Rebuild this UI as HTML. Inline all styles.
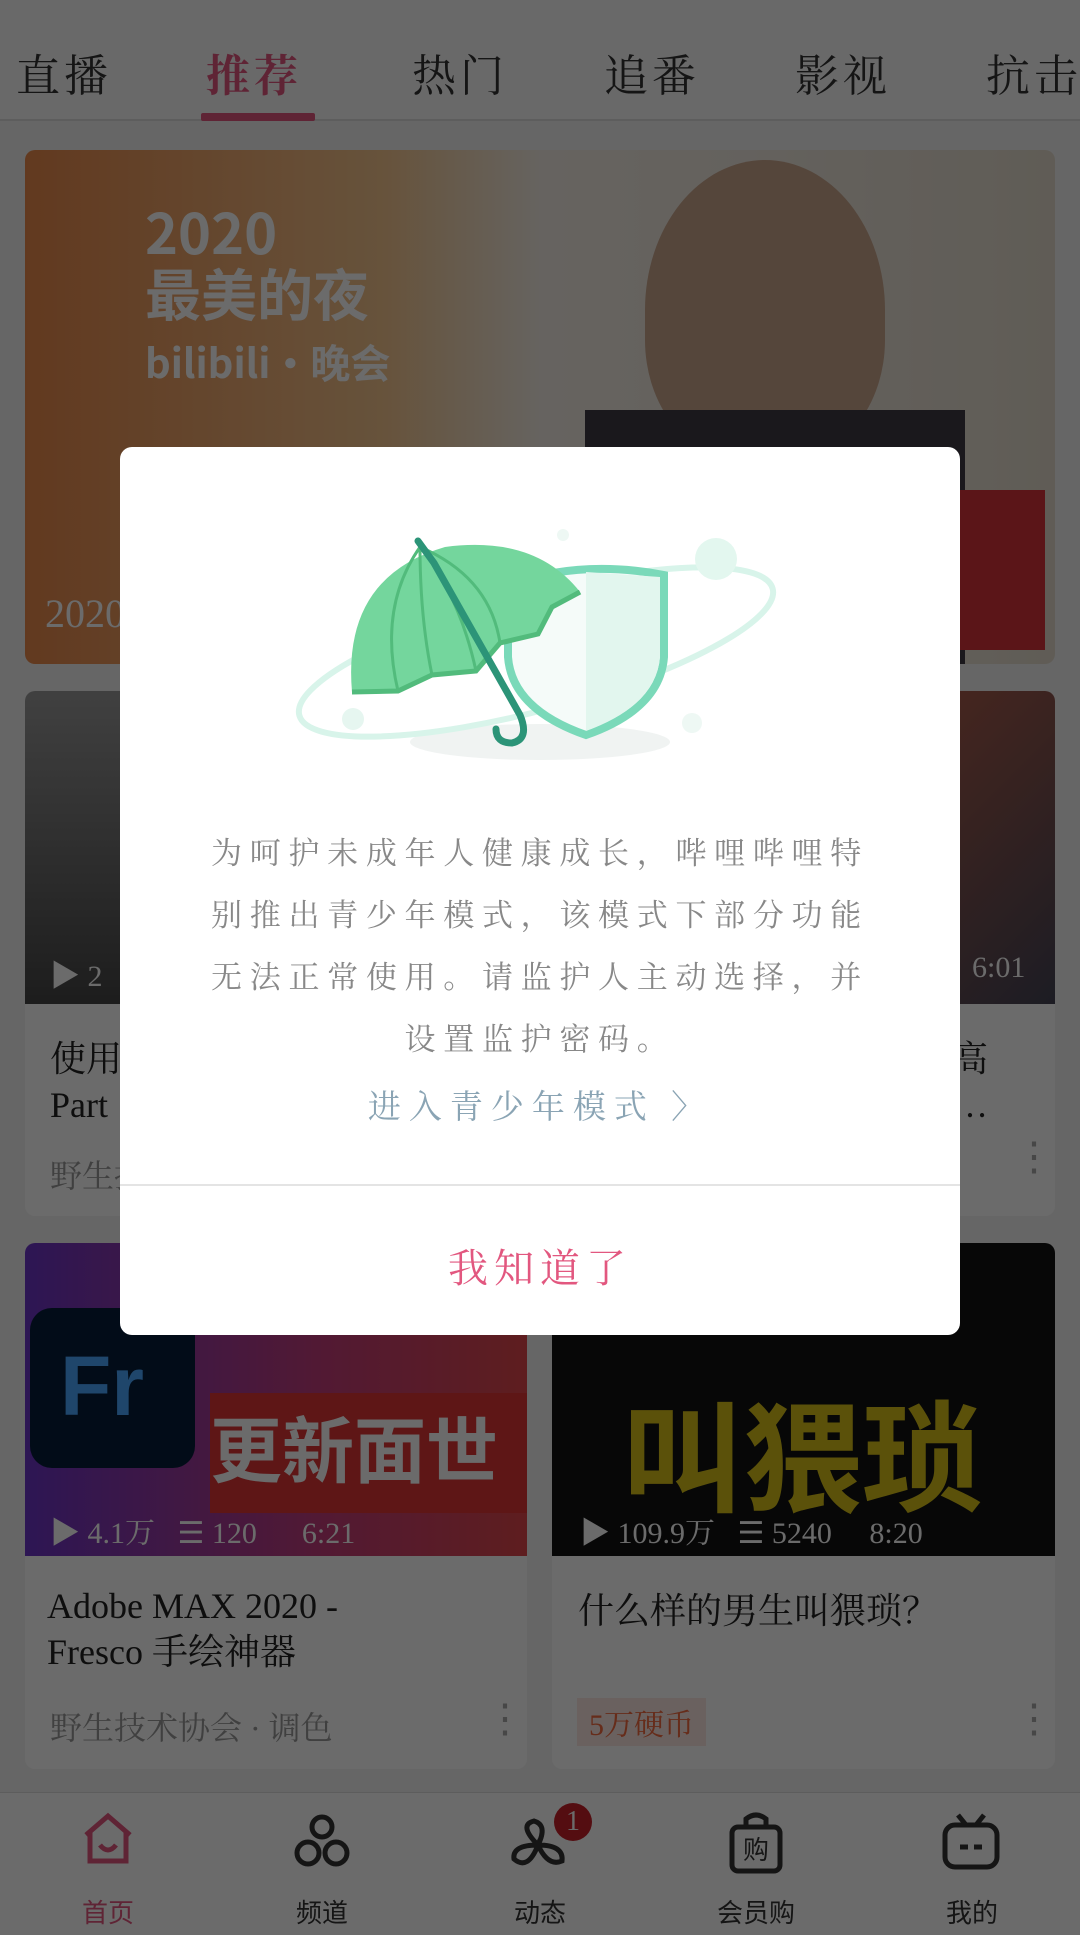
<!DOCTYPE html>
<html><head><meta charset="utf-8"><style>
*{margin:0;padding:0;box-sizing:border-box}
body{width:1080px;height:1935px;position:relative;overflow:hidden;background:#f4f4f4;font-family:"Liberation Serif","Noto Serif CJK SC","Noto Sans CJK SC",serif}
.abs{position:absolute}
.tabs{left:0;top:0;width:1080px;height:121px;background:#fafafa;border-bottom:2px solid #ddd}
.tab{position:absolute;top:40px;font-size:44px;color:#333;letter-spacing:4px;white-space:nowrap}
.card{background:#fff;border-radius:10px;overflow:hidden}
.t{font-size:36px;color:#222;line-height:46px}
.s{font-size:32px;color:#999}
.meta{font-size:30px;color:#fff}
.dots{font-size:40px;color:#aaa;line-height:12px}
.nav{left:0;top:1792px;width:1080px;height:143px;background:#fff;border-top:1px solid #ddd}
.ni{position:absolute;top:100px;font-size:26px;color:#333;width:120px;text-align:center;font-family:"Noto Sans CJK SC",sans-serif}
.ov{left:0;top:0;width:1080px;height:1935px;background:rgba(0,0,0,0.58)}
.dlg{left:120px;top:447px;width:840px;height:888px;background:#fff;border-radius:12px}
.txt{position:absolute;left:0;width:840px;top:376px;text-align:center;font-size:31px;line-height:62px;color:#888;letter-spacing:7.7px;white-space:nowrap}
</style></head><body>
<div class="abs tabs">
<div class="tab" style="left:16px">直播</div>
<div class="tab" style="left:206px;color:#e2577f;font-weight:bold">推荐</div>
<div class="abs" style="left:201px;top:113px;width:114px;height:8px;background:#e2577f;border-radius:2px"></div>
<div class="tab" style="left:412px">热门</div>
<div class="tab" style="left:604px">追番</div>
<div class="tab" style="left:795px">影视</div>
<div class="tab" style="left:986px">抗击</div>
</div>
<div class="abs card" style="left:25px;top:150px;width:1030px;height:514px;background:linear-gradient(90deg,#e9894b 0%,#f5c68f 35%,#f3ede4 50%,#efe8df 70%,#e4dccd 100%)">
<div class="abs" style="left:120px;top:50px;font-size:56px;color:#fff;font-weight:bold;font-family:'Noto Sans CJK SC',sans-serif;line-height:62px">2020<br>最美的夜<br><span style="font-size:40px">bilibili·晚会</span></div>
<div class="abs" style="left:620px;top:10px;width:240px;height:300px;border-radius:50% 50% 40% 40%;background:#caa68d"></div>
<div class="abs" style="left:560px;top:260px;width:380px;height:260px;background:#3e3a44"></div>
<div class="abs" style="left:880px;top:340px;width:140px;height:160px;background:#d9343a"></div>
<div class="abs" style="left:20px;top:440px;font-size:40px;color:#fff">2020</div>
</div>
<div class="abs card" style="left:25px;top:691px;width:502px;height:525px">
<div style="height:313px;background:linear-gradient(#9a9a9a,#454545)"></div>
<div class="abs t" style="left:25px;top:345px">使用 PS...<br>Part</div>
<div class="abs s" style="left:25px;top:460px">野生技术协会</div>
<div class="abs meta" style="left:25px;top:260px">▶ 2</div></div>
<div class="abs card" style="left:552px;top:691px;width:503px;height:525px">
<div style="height:313px;background:linear-gradient(135deg,#2a3a6a,#a45a4a,#445)"></div>
<div class="abs t" style="left:400px;top:345px">高<br>…</div>
<div class="abs meta" style="left:420px;top:260px">6:01</div>
<div class="abs dots" style="left:462px;top:460px">⋮</div></div>
<div class="abs card" style="left:25px;top:1243px;width:502px;height:526px">
<div style="height:313px;background:linear-gradient(90deg,#6c35c8,#c43d7a 60%,#e0474a)"><div class="abs" style="left:5px;top:65px;width:165px;height:160px;background:#061e3a;border-radius:22px;color:#4aa7ff;font:bold 84px 'Liberation Sans',sans-serif;padding:30px 0 0 30px">Fr</div>
<div class="abs" style="left:185px;top:150px;width:317px;height:120px;background:#e03535;color:#fff;font:bold 72px 'Noto Sans CJK SC',sans-serif;white-space:nowrap;overflow:hidden">更新面世</div></div>
<div class="abs meta" style="left:25px;top:265px">▶ 4.1万 &nbsp; ☰ 120 &nbsp;&nbsp;&nbsp;&nbsp; 6:21</div>
<div class="abs t" style="left:22px;top:340px">Adobe MAX 2020 -<br>Fresco 手绘神器</div>
<div class="abs s" style="left:25px;top:460px">野生技术协会 · 调色</div>
<div class="abs dots" style="left:460px;top:470px">⋮</div></div>
<div class="abs card" style="left:552px;top:1243px;width:503px;height:526px">
<div style="height:313px;background:#111;position:relative"><div class="abs" style="left:70px;top:120px;color:#d8c21a;font:bold 120px 'Noto Sans CJK SC',sans-serif">叫猥琐</div></div>
<div class="abs meta" style="left:28px;top:265px">▶ 109.9万 &nbsp; ☰ 5240 &nbsp;&nbsp;&nbsp; 8:20</div>
<div class="abs t" style="left:26px;top:345px">什么样的男生叫猥琐？</div>
<div class="abs" style="left:25px;top:455px;padding:2px 12px;background:#fde8e2;color:#f26a3f;font-size:30px">5万硬币</div>
<div class="abs dots" style="left:462px;top:470px">⋮</div></div>
<div class="abs nav">
<svg class="abs" style="left:80px;top:18px" width="56" height="56" viewBox="0 0 56 56" fill="none" stroke="#e2577f" stroke-width="5"><path d="M6 24 L28 5 L50 24 M10 20 V50 H46 V20"/><path d="M20 34 Q28 44 36 34"/></svg>
<svg class="abs" style="left:292px;top:20px" width="60" height="56" viewBox="0 0 60 56" fill="none" stroke="#333" stroke-width="5"><circle cx="30" cy="14" r="10"/><circle cx="16" cy="40" r="11"/><circle cx="44" cy="40" r="11"/></svg>
<svg class="abs" style="left:508px;top:22px" width="64" height="60" viewBox="0 0 64 60" fill="none" stroke="#333" stroke-width="5"><path d="M30 30 Q10 10 26 6 Q40 10 30 30 Q56 30 54 46 Q40 52 30 30 Q20 56 6 44 Q4 30 30 30"/></svg>
<div class="abs" style="left:554px;top:10px;width:38px;height:38px;border-radius:50%;background:#c8202a;color:#fff;font-size:28px;text-align:center;line-height:38px">1</div>
<svg class="abs" style="left:726px;top:18px" width="60" height="64" viewBox="0 0 60 64" fill="none" stroke="#333" stroke-width="5"><path d="M20 16 V8 Q30 0 40 8 V16"/><rect x="6" y="16" width="48" height="44" rx="6"/><text x="30" y="48" font-size="26" text-anchor="middle" fill="#333" stroke="none" font-family="Noto Sans CJK SC">购</text></svg>
<svg class="abs" style="left:940px;top:18px" width="62" height="60" viewBox="0 0 62 60" fill="none" stroke="#333" stroke-width="5"><path d="M18 4 L26 14 M44 4 L36 14"/><rect x="5" y="14" width="52" height="42" rx="10"/><path d="M20 36 H28 M34 36 H42"/></svg>
<div class="ni" style="left:48px;color:#e2577f">首页</div>
<div class="ni" style="left:262px">频道</div>
<div class="ni" style="left:480px">动态</div>
<div class="ni" style="left:696px">会员购</div>
<div class="ni" style="left:912px">我的</div>
</div>
<div class="abs ov"></div>
<div class="abs dlg">
<svg class="abs" style="left:0;top:0" width="840" height="340" viewBox="0 0 840 340">
<ellipse cx="420" cy="295" rx="130" ry="18" fill="#f0f3f2"/>
<ellipse cx="416" cy="205" rx="245" ry="58" transform="rotate(-15 416 205)" fill="none" stroke="#d8f4ea" stroke-width="6"/>
<circle cx="596" cy="112" r="21" fill="#e3f7ef"/><circle cx="233" cy="272" r="11" fill="#e6f6f0"/><circle cx="572" cy="276" r="10" fill="#eef8f4"/><circle cx="443" cy="88" r="6" fill="#eef8f4"/>
<path d="M388 138 Q460 112 544 128 L544 210 Q540 262 466 288 Q392 262 388 210 Z" fill="#f5fbf9" stroke="#7ad9b9" stroke-width="8"/>
<path d="M466 125 L540 130 L540 210 Q536 258 466 284 Z" fill="#e2f6ee"/>
<path d="M232 245 Q222 130 325 100 Q415 88 460 145 L432 160 L418 187 L380 196 L356 224 L312 228 L278 244 Z" fill="#74d69d"/>
<path d="M232 245 L278 244 L312 228 L356 224 L380 196 L418 187 L432 160 L460 145" fill="none" stroke="#52bb7c" stroke-width="5"/>
<path d="M300 100 Q258 160 278 244 M300 100 Q300 170 312 228 M300 100 Q340 150 356 224 M300 100 Q370 130 380 196" stroke="#52bb7c" stroke-width="3" fill="none"/>
<path d="M298 94 L314 116 L400 268 Q410 292 392 296 Q376 296 376 282" stroke="#2c9478" stroke-width="7" fill="none" stroke-linecap="round"/>
</svg>
<div class="txt">为呵护未成年人健康成长，哔哩哔哩特<br>别推出青少年模式，该模式下部分功能<br>无法正常使用。请监护人主动选择，并<br>设置监护密码。</div>
<div class="abs" style="left:0;top:634px;width:840px;text-align:center;font-size:33px;color:#8aa4b4;letter-spacing:8px">进入青少年模式 〉</div>
<div class="abs" style="left:0;top:737px;width:840px;height:2px;background:#e4e4e4"></div>
<div class="abs" style="left:0;top:790px;width:840px;text-align:center;font-size:40px;color:#e2577f;letter-spacing:6px">我知道了</div>
</div>
</body></html>
